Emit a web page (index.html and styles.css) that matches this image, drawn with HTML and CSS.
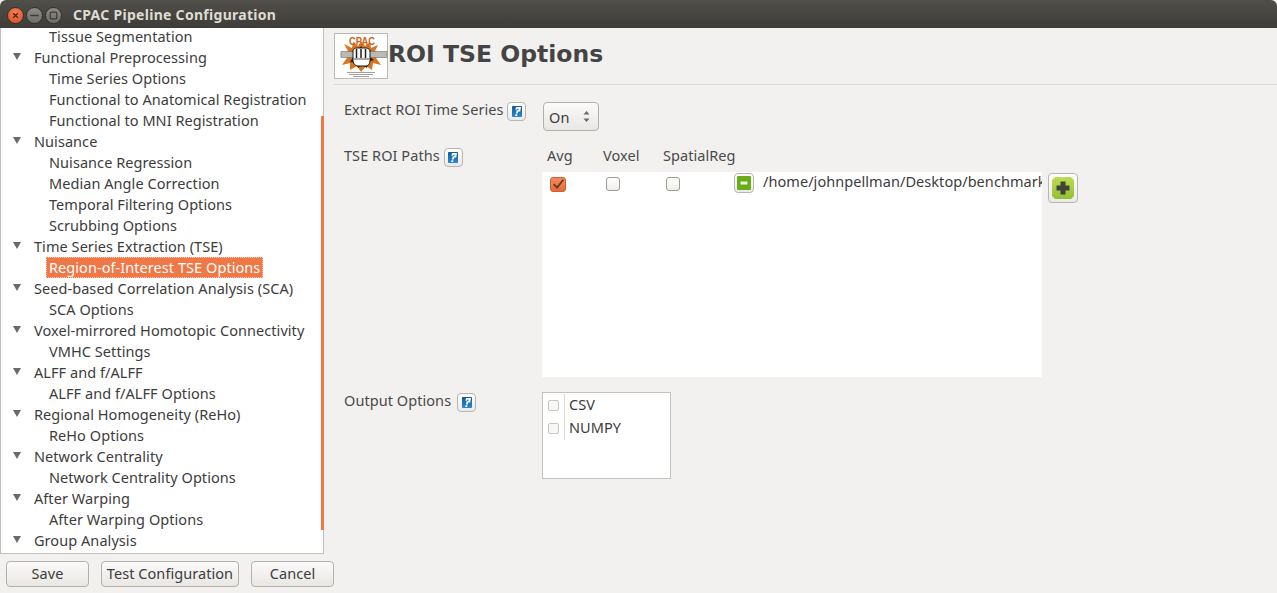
FILE: index.html
```html
<!DOCTYPE html>
<html lang="en">
<head>
<meta charset="utf-8">
<title>CPAC Pipeline Configuration</title>
<link rel="stylesheet" href="styles.css">
</head>
<body>
<svg class="defs" width="0" height="0" aria-hidden="true">
  <defs>
    <linearGradient id="helpblue" x1="0" y1="0" x2="0" y2="1">
      <stop offset="0" stop-color="#0f5a9c"/>
      <stop offset="1" stop-color="#2a8ad0"/>
    </linearGradient>
    <linearGradient id="plusgreen" x1="0" y1="0" x2="0" y2="1">
      <stop offset="0" stop-color="#bcdc55"/>
      <stop offset="1" stop-color="#94bf33"/>
    </linearGradient>
  </defs>
  <symbol id="help" viewBox="0 0 10 11">
    <rect width="10" height="11" rx=".8" fill="url(#helpblue)"/>
    <path d="M4 1H9L8.200 5.500H6.300L5.700 7.500H3.900L4.700 4.200H6.200L6.600 2.700H5.300L5 3.700H3.400Z" fill="#fff"/>
    <rect x="3.300" y="8.300" width="2" height="1.700" fill="#fff"/>
  </symbol>
</svg>
<div class="window">
  <header class="titlebar">
    <div class="controls">
      <span class="ctl ctl-close"><svg viewBox="0 0 16 16"><path d="M5.500 5.500L10.500 10.500M10.500 5.500L5.500 10.500" stroke="#5a1d08" stroke-width="1.500"/></svg></span>
      <span class="ctl"><svg viewBox="0 0 16 16"><path d="M3.500 8H12.500" stroke="#3b3a36" stroke-width="1.500"/></svg></span>
      <span class="ctl"><svg viewBox="0 0 16 16"><rect x="4.500" y="4.500" width="7" height="7" rx="1" fill="none" stroke="#3b3a36" stroke-width="1.300"/></svg></span>
    </div>
    <span class="wintitle">CPAC Pipeline Configuration</span>
  </header>
  <div class="main">
    <aside class="left">
      <div class="tree">
        <div class="item leaf">Tissue Segmentation</div>
        <div class="item group">Functional Preprocessing</div>
        <div class="item leaf">Time Series Options</div>
        <div class="item leaf">Functional to Anatomical Registration</div>
        <div class="item leaf">Functional to MNI Registration</div>
        <div class="item group">Nuisance</div>
        <div class="item leaf">Nuisance Regression</div>
        <div class="item leaf">Median Angle Correction</div>
        <div class="item leaf">Temporal Filtering Options</div>
        <div class="item leaf">Scrubbing Options</div>
        <div class="item group">Time Series Extraction (TSE)</div>
        <div class="item leaf current"><span class="selected">Region-of-Interest TSE Options</span></div>
        <div class="item group">Seed-based Correlation Analysis (SCA)</div>
        <div class="item leaf">SCA Options</div>
        <div class="item group">Voxel-mirrored Homotopic Connectivity</div>
        <div class="item leaf">VMHC Settings</div>
        <div class="item group">ALFF and f/ALFF</div>
        <div class="item leaf">ALFF and f/ALFF Options</div>
        <div class="item group">Regional Homogeneity (ReHo)</div>
        <div class="item leaf">ReHo Options</div>
        <div class="item group">Network Centrality</div>
        <div class="item leaf">Network Centrality Options</div>
        <div class="item group">After Warping</div>
        <div class="item leaf">After Warping Options</div>
        <div class="item group">Group Analysis</div>
        <div class="scrollbar"></div>
      </div>
      <div class="actions">
        <button class="btn btn-save">Save</button>
        <button class="btn btn-test">Test Configuration</button>
        <button class="btn btn-cancel">Cancel</button>
      </div>
    </aside>
    <main class="panel">
      <div class="panel-head">
        <svg class="logo" viewBox="0 0 54 46" role="img" aria-label="CPAC logo">
          <rect x=".5" y=".5" width="53" height="45" fill="#fff" stroke="#bdbab6"/>
          <path d="M27 8L31 13 36 9 37 15 44 12 41 18 49 21 42 25 47 32 39 30 38 37 32 33 27 39 23 33 16 37 16 30 8 32 13 25 6 21 14 18 10 11 18 15 19 9 24 13Z" fill="#d9731d"/>
          <path d="M27 13L30 18 37 17 35 23 40 27 34 29 33 35 28 32 24 35 22 30 16 29 19 24 16 18 23 18Z" fill="#2d211a"/>
          <rect x="7" y="18.500" width="46" height="6" fill="#b9b9b6" stroke="#77756f" stroke-width=".6"/>
          <path d="M19 18C19 16 21 15 23 15H32C35 15 36 17 36 19V27C36 30 35 33 32 33H24C21 33 19 30 19 27Z" fill="#fff" stroke="#1e1e1e" stroke-width="1"/>
          <path d="M22.500 16V25M27 16V25M31.500 16V25" stroke="#1e1e1e" stroke-width="1.500"/>
          <path d="M20 26H35" stroke="#1e1e1e" stroke-width=".8"/>
          <text class="logo-t" x="28" y="12" textLength="26" lengthAdjust="spacingAndGlyphs">CPAC</text>
          <path d="M13 39.500H41M15 41.500H39M19 43.500H35" stroke="#8b8782" stroke-width=".8"/>
        </svg>
        <h1 class="title">ROI TSE Options</h1>
      </div>
      <div class="form">
        <div class="row row-extract">
          <div class="label-cell label-extract"><span>Extract ROI Time Series</span><button class="help"><svg><use href="#help"/></svg></button></div>
          <div class="combo"><span>On</span><svg class="updown" viewBox="0 0 7 13"><path d="M3.500 1L6.500 4.500H.5ZM3.500 12L.5 8.500H6.500Z" fill="#6a6a66"/></svg></div>
        </div>
        <div class="row">
          <div class="label-cell label-paths"><span>TSE ROI Paths</span><button class="help"><svg><use href="#help"/></svg></button></div>
          <div class="paths">
            <div class="path-heads"><span class="h-avg">Avg</span><span class="h-voxel">Voxel</span><span class="h-spatial">SpatialReg</span></div>
            <div class="path-body">
              <div class="path-list">
                <div class="path-row">
                  <span class="check checked"><svg viewBox="0 0 16 14"><path d="M3 6.500L7 10.500 14 1.500" fill="none" stroke="#5b3a2a" stroke-width="2"/></svg></span>
                  <span class="check c2"></span>
                  <span class="check c3"></span>
                  <button class="mini"><svg viewBox="0 0 14 14"><rect width="14" height="14" rx="1" fill="#69ad1c"/><rect x="3.500" y="5.500" width="7" height="3" fill="#e7f2d8"/></svg></button>
                  <span class="path-text">/home/johnpellman/Desktop/benchmark_data/rois.txt</span>
                </div>
              </div>
              <button class="plus"><svg viewBox="0 0 22 22"><path d="M3 0H19L22 3V19L19 22H3L0 19V3Z" fill="url(#plusgreen)"/><path d="M8.500 4.500H13.500V8.500H17.500V13.500H13.500V17.500H8.500V13.500H4.500V8.500H8.500Z" fill="#3f4436"/></svg></button>
            </div>
          </div>
        </div>
        <div class="row row-output">
          <div class="label-cell label-output"><span>Output Options</span><button class="help"><svg><use href="#help"/></svg></button></div>
          <div class="listbox">
            <div class="opt"><span class="opt-check"><i></i></span><span class="opt-text">CSV</span></div>
            <div class="opt"><span class="opt-check"><i></i></span><span class="opt-text">NUMPY</span></div>
          </div>
        </div>
      </div>
    </main>
  </div>
</div>
</body>
</html>
```
FILE: styles.css
```css
* { box-sizing: border-box; }
html, body { margin: 0; height: 100%; }
body {
  background: #f2f1ef;
  color: #3c3c3c;
  font-family: "Noto Sans", "Open Sans", sans-serif;
  font-size: 14.5px;
  letter-spacing: .06px;
  overflow: hidden;
}
.defs { position: absolute; }
.window { width: 1277px; height: 593px; display: flex; flex-direction: column; }
button { font: inherit; letter-spacing: inherit; color: inherit; padding: 0; cursor: default; }

.titlebar {
  height: 28px;
  flex: none;
  display: flex;
  align-items: center;
  padding: 2px 0 0 7px;
  background: linear-gradient(#504f4a, #3d3c38);
  border-radius: 6px 6px 0 0;
}
.controls { display: flex; gap: 2px; width: 66px; }
.ctl {
  width: 17px; height: 17px; border-radius: 50%;
  border: 1px solid #33322f;
  background: linear-gradient(#8b8a84, #6f6e69);
  display: block;
}
.ctl svg { width: 100%; height: 100%; display: block; }
.ctl-close { background: radial-gradient(circle at 50% 35%, #f3845a, #d9481b); }
.wintitle { color: #dfdbd2; font-weight: 700; font-size: 14px; letter-spacing: .29px; margin-top: -2px; }

.main { flex: 1; display: flex; min-height: 0; }
.left { width: 334px; flex: none; display: flex; flex-direction: column; }
.tree {
  position: relative;
  width: 324px;
  height: 526px;
  background: #fff;
  border: 1px solid #c4c1bc;
  border-top: 0;
}
.item { height: 21px; line-height: 17px; white-space: nowrap; color: #3c3c3c; }
.leaf { padding-left: 48px; }
.current { display: flow-root; }
.group { padding-left: 33px; position: relative; }
.group::before {
  content: "";
  position: absolute;
  left: 12px; top: 4px;
  border-left: 4px solid transparent;
  border-right: 4px solid transparent;
  border-top: 7px solid #6a6a66;
}
.selected {
  display: block;
  width: fit-content;
  margin: -2px 0 0 -3px;
  padding: 0 3px;
  height: 21px;
  line-height: 21px;
  background: #f07746;
  color: #fff;
  outline: 1px dotted #f9c9b2;
  outline-offset: -1px;
}
.scrollbar {
  position: absolute;
  right: -1px; top: 88px;
  width: 3px; height: 414px;
  background: #f07746;
}
.actions { display: flex; padding: 7px 0 0 6px; }
.btn {
  height: 26px;
  padding-bottom: 2px;
  border: 1px solid #b5b1aa;
  border-radius: 4px;
  background: linear-gradient(#fbfafa, #e9e7e4);
}
.btn-save { width: 83px; margin-right: 12px; }
.btn-test { width: 138px; margin-right: 12px; }
.btn-cancel { width: 83px; }

.panel { flex: 1; min-width: 0; }
.panel-head {
  height: 57px;
  display: flex;
  align-items: flex-start;
  border-bottom: 1px solid #dcd9d5;
  padding-top: 5px;
}
.logo { width: 54px; height: 46px; flex: none; display: block; }
.logo-t { font: 700 10px "Liberation Sans", sans-serif; fill: #c9651a; text-anchor: middle; }
.title {
  margin: 0;
  font-family: "DejaVu Sans", sans-serif;
  font-weight: 700;
  font-size: 23.500px;
  letter-spacing: 0;
  line-height: 42px;
  color: #444;
}
.form { padding-left: 10px; }
.row { display: flex; }
.label-cell { width: 198px; flex: none; display: flex; align-items: flex-start; gap: 5px; line-height: 20px; color: #4a4a4a; }
.help {
  width: 19px; height: 19px;
  flex: none;
  border: 1px solid #b9b6b0;
  border-radius: 4px;
  background: linear-gradient(#fff, #ebe9e6);
  display: flex; align-items: center; justify-content: center;
}
.help svg { width: 10px; height: 11px; display: block; }
.row-extract { margin-top: 17px; height: 43px; }
.label-extract { line-height: 14px; gap: 4px; }
.combo {
  width: 56px; height: 29px;
  margin-left: 1px;
  border: 1px solid #b5b1aa;
  border-radius: 4px;
  background: linear-gradient(#fbfafa, #e9e7e4);
  display: flex; align-items: center; justify-content: space-between;
  padding: 0 8px 0 5px;
  color: #3c3c3c;
}
.updown { width: 7px; height: 13px; }
.label-paths { gap: 4px; }
.label-paths .help { margin-top: 3px; }
.paths { display: flex; flex-direction: column; }
.path-heads { height: 27px; display: flex; line-height: 20px; color: #4a4a4a; }
.h-avg { width: 56px; padding-left: 5px; }
.h-voxel { width: 60px; padding-left: 5px; }
.h-spatial { padding-left: 5px; }
.path-body { display: flex; gap: 6px; align-items: flex-start; }
.path-list { width: 500px; height: 205px; background: #fff; overflow: hidden; }
.path-row { display: flex; align-items: flex-start; padding-top: 1px; white-space: nowrap; }
.check {
  width: 14px; height: 14px;
  flex: none;
  margin-top: 4px;
  border: 1px solid #9e9a94;
  border-radius: 3px;
  background: linear-gradient(#fff, #efeeec);
}
.checked {
  width: 16px; height: 15px;
  margin-left: 8px;
  border-color: #c95f33;
  background: linear-gradient(#f48a5c, #e96b3a);
}
.checked svg { width: 14px; height: 13px; display: block; }
.c2 { margin-left: 40px; }
.c3 { margin-left: 46px; }
.mini {
  width: 20px; height: 20px;
  flex: none;
  margin-left: 54px;
  border: 1px solid #b9b6b0;
  border-radius: 4px;
  background: linear-gradient(#fff, #ebe9e6);
  display: flex; align-items: center; justify-content: center;
}
.mini svg { width: 14px; height: 14px; display: block; }
.path-text { margin-left: 9px; line-height: 17px; color: #3c3c3c; }
.plus {
  width: 30px; height: 30px;
  margin-top: 1px;
  border: 1px solid #b9b6b0;
  border-radius: 4px;
  background: linear-gradient(#fff, #ebe9e6);
  display: flex; align-items: center; justify-content: center;
}
.plus svg { width: 22px; height: 22px; display: block; }
.row-output { margin-top: 15px; }
.label-output { line-height: 16px; gap: 6px; }
.label-output .help { margin-top: 1px; }
.listbox {
  width: 129px; height: 87px;
  background: #fff;
  border: 1px solid #c4c1bc;
  padding-top: 1px;
}
.opt { display: flex; height: 23px; align-items: stretch; }
.opt-check { width: 22px; border-right: 1px solid #dcdad7; display: flex; align-items: center; justify-content: center; padding-right: 1px; }
.opt-check i { width: 11px; height: 11px; border: 1px solid #c9c6c2; border-radius: 2px; background: #f7f7f6; display: block; }
.opt-text { padding-left: 4px; line-height: 20px; color: #3c3c3c; }
```
